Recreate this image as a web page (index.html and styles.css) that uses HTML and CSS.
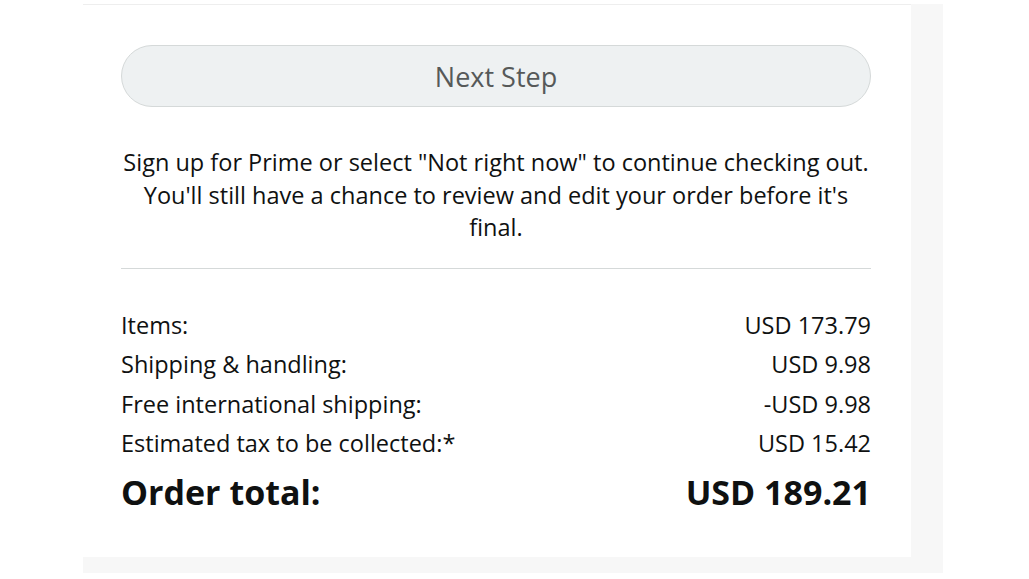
FILE: index.html
```html
<!DOCTYPE html>
<html lang="en">
<head>
   <meta charset="UTF-8">
   <meta name="viewport" content="width=device-width, initial-scale=1.0">
   <title>Order Summary</title>
   <link rel="stylesheet" href="styles.css">
</head>
<body>
   <div class="page">
       <div class="frame">
           <div class="summary-card">
               <button class="next-btn">Next Step</button>

               <p class="note">Sign up for Prime or select "Not right now" to continue checking out. You'll still have a chance to review and edit your order before it's final.</p>

               <hr class="divider">

               <div class="totals">
                   <div class="row">
                       <span>Items:</span>
                       <span>USD 173.79</span>
                   </div>
                   <div class="row">
                       <span>Shipping &amp; handling:</span>
                       <span>USD 9.98</span>
                   </div>
                   <div class="row">
                       <span>Free international shipping:</span>
                       <span>-USD 9.98</span>
                   </div>
                   <div class="row">
                       <span>Estimated tax to be collected:*</span>
                       <span>USD 15.42</span>
                   </div>
                   <div class="row total">
                       <span>Order total:</span>
                       <span>USD 189.21</span>
                   </div>
               </div>
           </div>
       </div>
   </div>
</body>
</html>
```

FILE: styles.css
```css
body {
    margin: 0;
    background: #fff;
    font-family: "Open Sans", "Noto Sans", sans-serif;
    color: #0f1111;
}

.page {
    padding: 4px 0 0 83px;
}

.frame {
    width: 828px;
    background: #f7f7f7;
    padding: 0 32px 16px 0;
}

.summary-card {
    background: #fff;
    border-top: 1px solid #eeeeee;
    padding: 40px 40px 37px 38px;
}

.next-btn {
    display: block;
    width: 100%;
    height: 62px;
    border: 1px solid #d5d9d9;
    border-radius: 31px;
    background: #eef1f2;
    color: #565959;
    font-family: inherit;
    font-size: 27px;
}

.note {
    margin: 39px 0 0;
    text-align: center;
    font-size: 23.5px;
    line-height: 32.5px;
    color: #0f1111;
}

.divider {
    margin: 24px 0 0;
    border: 0;
    border-top: 1px solid #d5d9d9;
}

.totals {
    margin-top: 37px;
}

.row {
    display: flex;
    justify-content: space-between;
    font-size: 23.5px;
    line-height: 39.5px;
}

.row.total {
    font-size: 34px;
    font-weight: bold;
    line-height: 56px;
}
```
